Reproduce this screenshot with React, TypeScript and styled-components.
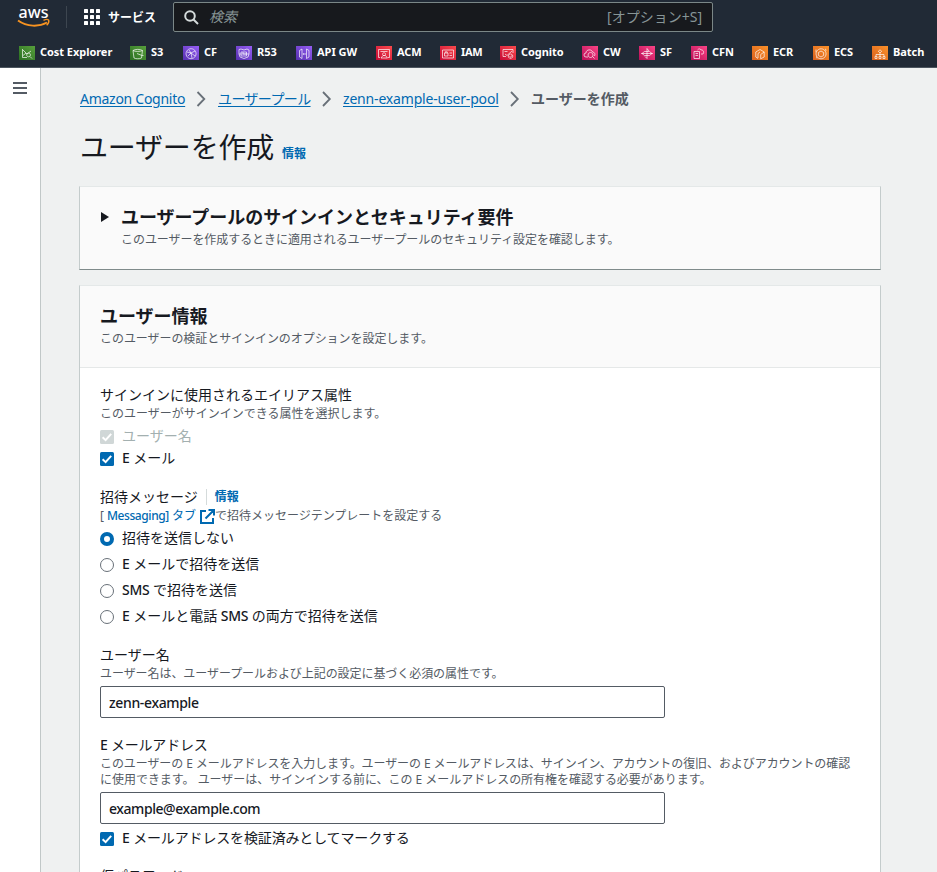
import React from 'react';
import styled, { createGlobalStyle } from 'styled-components';

const BLUE = '#0069b1';
const INK = '#16191f';
const GREY = '#545b64';

const Global = createGlobalStyle`
  * { box-sizing: border-box; }
  body {
    margin: 0;
    background: #eff1f1;
    font-family: "Noto Sans", "Noto Sans CJK JP", sans-serif;
    font-size: 14px;
    color: ${INK};
    overflow: hidden;
  }
`;

const Page = styled.div`
  width: 937px;
  height: 872px;
  overflow: hidden;
  display: flex;
  flex-direction: column;
`;

const TopBar = styled.header`
  flex: none;
  height: 68px;
  background: #212a36;
  border-bottom: 1px solid #4c555f;
  color: #fff;
`;

const TopRow = styled.div`
  display: flex;
  align-items: center;
  height: 34px;
  padding-left: 17px;
`;

const Logo = styled.svg`
  flex: none;
  width: 34px;
  height: 24px;
  margin-top: -2px;
  overflow: visible;
`;

const Divider = styled.span`
  width: 1px;
  height: 22px;
  margin: 0 17px 0 15px;
  background: #3d4650;
`;

const Services = styled.div`
  display: flex;
  align-items: center;
  gap: 8px;
  width: 89px;
  font-size: 12px;
  font-weight: 700;
  white-space: nowrap;
  svg { flex: none; }
`;

const Search = styled.div`
  display: flex;
  align-items: center;
  width: 540px;
  height: 30px;
  padding: 0 10px 0 10px;
  background: #17191d;
  border: 1px solid #7b8787;
  border-radius: 2px;
  color: #879596;
  font-size: 14px;
  line-height: 20px;
  span { margin-top: -1px; }
`;

const Placeholder = styled.span`
  flex: 1;
  margin-left: 10px;
  font-style: italic;
`;

const Favorites = styled.nav`
  display: grid;
  grid-template-columns: 111px 53px 53px 60px 80px 64px 60px 82px 57px 52px 61px 61px 59px 60px;
  height: 33px;
  padding: 3px 0 0 19px;
  align-items: center;
`;

const Favorite = styled.div<{ $track?: number }>`
  display: flex;
  align-items: center;
  gap: 5px;
  font: 700 11px/16px "Noto Sans", sans-serif;
  letter-spacing: ${p => p.$track ?? 0}px;
  white-space: nowrap;
  svg { flex: none; margin-top: 1px; }
`;

const Body = styled.div`
  flex: 1;
  display: flex;
  min-height: 0;
`;

const Rail = styled.aside`
  flex: none;
  width: 41px;
  padding: 14px 0 0 13px;
  background: #fff;
  border-right: 1px solid #c1c8c8;
  svg { display: block; }
`;

const Main = styled.main`
  width: 802px;
  margin-left: 38px;
  padding-top: 21px;
`;

const Crumbs = styled.nav`
  display: flex;
  align-items: center;
  height: 20px;
  padding-left: 1px;
  line-height: 20px;
  white-space: nowrap;
  svg { flex: none; }
`;

const CrumbLink = styled.a<{ $w: number; $track?: number }>`
  width: ${p => p.$w}px;
  color: ${BLUE};
  letter-spacing: ${p => p.$track ?? 0}px;
  text-decoration: underline;
  text-underline-offset: 2px;
`;

const CrumbCurrent = styled.span`
  color: ${GREY};
  font-weight: 700;
`;

const TitleRow = styled.div`
  display: flex;
  align-items: baseline;
  gap: 8px;
  height: 40px;
  margin: 18px 0 19px 1px;
`;

const Title = styled.h1`
  margin: 0;
  font-size: 28px;
  line-height: 40px;
  font-weight: 400;
  letter-spacing: -0.2px;
`;

const Info = styled.a`
  color: ${BLUE};
  font-size: 12px;
  font-weight: 700;
`;

const Card = styled.section<{ $tall?: boolean }>`
  height: ${p => (p.$tall ? '640px' : '84px')};
  margin-bottom: 15px;
  background: ${p => (p.$tall ? '#fff' : '#fafafa')};
  border: 1px solid #c4cccc;
  border-top-color: #e4e8e8;
  border-bottom-color: #7f8b8b;
`;

const CardHead = styled.div<{ $arrow?: boolean }>`
  display: flex;
  gap: 12px;
  height: 82px;
  padding: 18px 0 0 20px;
  background: #fafafa;
  border-bottom: ${p => (p.$arrow ? 'none' : '1px solid #e5e8e8')};
  svg { flex: none; margin-top: 6px; }
`;

const CardTitle = styled.h2`
  margin: 0;
  font-size: 18px;
  line-height: 24px;
  font-weight: 700;
  letter-spacing: -0.05px;
`;

const Hint = styled.div`
  margin-top: 1px;
  color: ${GREY};
  font-size: 12px;
  line-height: 16px;
  white-space: nowrap;
`;

const HeadHint = styled(Hint)`
  line-height: 20px;
  letter-spacing: -0.06px;
`;

const Tight = styled.span<{ $track: number }>`
  letter-spacing: ${p => p.$track}px;
`;

const Form = styled.div`
  display: flex;
  flex-direction: column;
  padding: 17px 20px 0;
`;

const Field = styled.div<{ $gap?: number }>`
  padding-bottom: ${p => p.$gap ?? 17}px;
`;

const Label = styled.div`
  display: flex;
  align-items: center;
  height: 20px;
  line-height: 20px;
  white-space: nowrap;
`;

const LabelInfo = styled(Info)`
  margin-left: 8px;
  padding-left: 8px;
  border-left: 1px solid #d5dbdb;
  line-height: 16px;
`;

const Options = styled.div<{ $top: number }>`
  padding-top: ${p => p.$top}px;
`;

const Option = styled.label<{ $h: number; $disabled?: boolean }>`
  display: flex;
  align-items: center;
  gap: 8px;
  height: ${p => p.$h}px;
  color: ${p => (p.$disabled ? '#a3b0b0' : INK)};
  line-height: 20px;
  white-space: nowrap;
`;

const OptionText = styled.span`
  padding-bottom: 2px;
`;

const Medium = styled.span<{ $track?: number }>`
  font-weight: 500;
  letter-spacing: ${p => p.$track ?? -0.3}px;
`;

const MessagingLine = styled(Hint)`
  display: flex;
  align-items: center;
  a { color: ${BLUE}; margin-left: 3px; }
  svg { margin: 0 0 0 4px; }
`;

const Input = styled.input<{ $track?: number }>`
  display: block;
  width: 565px;
  height: 32px;
  margin-top: 4px;
  padding: 0 8px;
  border: 1px solid #545b64;
  border-radius: 2px;
  outline: none;
  background: #fff;
  color: ${INK};
  font: 500 14px "Noto Sans", sans-serif;
  letter-spacing: ${p => p.$track ?? 0}px;
`;

const Check = ({ disabled }: { disabled?: boolean }) => (
  <svg width="14" height="14" viewBox="0 0 14 14">
    <rect width="14" height="14" rx="1.5" fill={disabled ? '#d0d7d7' : BLUE} />
    <path d="M2.6 7.2 5.6 10.1 11.2 3.8" fill="none" stroke="#fff" strokeWidth="2" />
  </svg>
);

const Radio = ({ on }: { on?: boolean }) => (
  <svg width="14" height="14" viewBox="0 0 14 14">
    {on ? (
      <circle cx="7" cy="7" r="5" fill="#fff" stroke={BLUE} strokeWidth="4" />
    ) : (
      <circle cx="7" cy="7" r="6.5" fill="#fff" stroke="#687078" />
    )}
  </svg>
);

const Chevron = ({ width }: { width: number }) => (
  <svg width={width} height="16" viewBox={`${-(width - 9) / 2} 0 ${width} 16`}>
    <path d="M.5 1 7.3 8 .5 15" fill="none" stroke="#687078" strokeWidth="1.8" />
  </svg>
);

type Fav = { name: string; tone: 'green' | 'purple' | 'red' | 'pink' | 'orange'; d: string; track?: number };

const tones = {
  green: ['#2a6f22', '#58a03c'],
  purple: ['#5730b0', '#965ef5'],
  red: ['#c60a35', '#fb4a4c'],
  pink: ['#b90f56', '#fb4487'],
  orange: ['#d9611f', '#fb9129'],
};

const favorites: Fav[] = [
  { name: 'Cost Explorer', tone: 'green', track: -0.05, d: 'M3.500 3v8.500H8M4 4l4 4 4-3M4 9.500l3-2.500M9.500 7a1.900 1.900 0 1 0 .1 0M11 10.500l2 2' },
  { name: 'S3', tone: 'green', d: 'M3 4.500c2-1.500 7.500-1.500 9.500 0M3 4.500l1 7.500c2 1 5.500 1 7.500 0l1-7.500M3 4.500c2 1.300 7 1.300 9.500 0M7 7.500l5 2h1.500' },
  { name: 'CF', tone: 'purple', track: -0.1, d: 'M8 2.700a5 5 0 1 0 .1 0M4 6l4 1 4-2M8 7l1 5M5 10l3-3 4 3M6 4l2 3' },
  { name: 'R53', tone: 'purple', d: 'M3 3.500 5 3l3 1 3-1 2 1v4l-1 3-4 1.500-4-1.500-1-3zM5 6h5.500v4H5zM7 6v2h3.500M3 8h10' },
  { name: 'API GW', tone: 'purple', d: 'M6 3v9.500L3.500 11V4.500zM10.500 3v9.500L13 11V4.500zM7.400 7v2M9 7v2' },
  { name: 'ACM', tone: 'red', track: -0.1, d: 'M4 11.500H2.500v-8h11v8H12M4.500 5.500h7M5 12l2-2.500h2.500l2 2.500zM8 6.700a1.500 1.500 0 1 0 .1 0' },
  { name: 'IAM', tone: 'red', track: -0.3, d: 'M2.500 4h11v8h-11zM4.500 7h3.500v3H4.500zM5.200 7V5.800h2V7M9.500 7H12M9.500 9.500H12' },
  { name: 'Cognito', tone: 'red', track: -0.05, d: 'M6 10.500H3v-7h10V7M4.500 5.500h3M5 8l2 1.500L12 5M10.500 8a2.200 2.200 0 1 0 .1 0M9.500 10.500l1 .8 1.500-2' },
  { name: 'CW', tone: 'pink', track: -0.1, d: 'M6 11H4a2 2 0 0 1 0-4c0-4 6-4 6.500-1 2 0 3 2 2 4M8.500 6.500a2.500 2.500 0 1 0 .1 0M10.500 10.500l2 2' },
  { name: 'SF', tone: 'pink', d: 'M8 2.500v10M5.500 5.500h5L13 7.500l-2.500 2h-5L3 7.500zM2 7.500h12M8 2.500 10 5M8 12.500l-2-2' },
  { name: 'CFN', tone: 'pink', track: -0.1, d: 'M3 5.500h5.500v7H3zM4.500 7.500H7M4.500 9.500H7M6.500 4c1-1.500 3-1.500 3.500 0 2-.5 3.500 2 2 4h-2' },
  { name: 'ECR', tone: 'orange', track: -0.1, d: 'M6 12.500 3.800 11V6L8 3.500 12.200 6v5l-3.500 1.800V8.500l3.500-2.500M6 12V7.500L8 6' },
  { name: 'ECS', tone: 'orange', track: -0.1, d: 'M8 2.800a5 5 0 1 0 .1 0M8 5l2.600 1.500v3L8 11 5.400 9.500v-3zM3 3.500v2.800M12.500 2.800l.5 2M4 12.500l-.5-2' },
  { name: 'Batch', tone: 'orange', track: -0.05, d: 'M8 7v3M4 10V8.500h8V10M8 3.800l1.700 1.500L8 7 6.300 5.300zM3 10.500h2v2H3zM7 10.500h2v2H7zM11 10.500h2v2h-2z' },
];

const FavIcon = ({ tone, d }: Fav) => (
  <svg width="16" height="14" viewBox="0 0 16 14">
    <defs>
      <linearGradient id={`g-${tone}`} x1="0" y1="1" x2="1" y2="0">
        <stop offset="0" stopColor={tones[tone][0]} />
        <stop offset="1" stopColor={tones[tone][1]} />
      </linearGradient>
    </defs>
    <rect width="16" height="14" fill={`url(#g-${tone})`} />
    <path d={d} fill="none" stroke="#fff" strokeOpacity=".85" strokeWidth=".8" />
  </svg>
);

export default function App() {
  return (
    <Page>
      <Global />
      <TopBar>
        <TopRow>
          <Logo viewBox="0 0 34 24">
            <text x="1.500" y="14.200" fill="#fff" fontFamily="Noto Sans" fontSize="17" fontWeight="500" textLength="30" lengthAdjust="spacingAndGlyphs">aws</text>
            <path d="M1 16.500C10 23 22 23 30 18.500" fill="none" stroke="#f79321" strokeWidth="2" />
            <path d="M26.500 16.300c2-.9 4.500-.9 5.200-.1.400 1-.6 3.500-2 5" fill="none" stroke="#f79321" strokeWidth="1.400" />
          </Logo>
          <Divider />
          <Services>
            <svg width="16" height="16" viewBox="0 0 16 16" fill="#fff">
              {[0, 6, 12].map(y => [0, 6, 12].map(x => <rect key={`${x}-${y}`} x={x} y={y} width="4" height="4" rx=".6" />))}
            </svg>
            サービス
          </Services>
          <Search>
            <svg width="15" height="15" viewBox="0 0 15 15" fill="none" stroke="#d5dbdb" strokeWidth="2">
              <circle cx="6" cy="6" r="4.800" />
              <path d="m9.500 9.500 4.500 4.500" />
            </svg>
            <Placeholder>検索</Placeholder>
            <span>[オプション+S]</span>
          </Search>
        </TopRow>
        <Favorites>
          {favorites.map(f => (
            <Favorite key={f.name} $track={f.track}>
              <FavIcon {...f} />
              {f.name}
            </Favorite>
          ))}
        </Favorites>
      </TopBar>
      <Body>
        <Rail>
          <svg width="14" height="12" viewBox="0 0 14 12" stroke="#545b64" strokeWidth="2">
            <path d="M0 1h14M0 6h14M0 11h14" />
          </svg>
        </Rail>
        <Main>
          <Crumbs>
            <CrumbLink $w={105} $track={-0.27}>Amazon Cognito</CrumbLink>
            <Chevron width={33} />
            <CrumbLink $w={93} $track={-0.62}>ユーザープール</CrumbLink>
            <Chevron width={32} />
            <CrumbLink $w={156} $track={-0.18}>zenn-example-user-pool</CrumbLink>
            <Chevron width={32} />
            <CrumbCurrent>ユーザーを作成</CrumbCurrent>
          </Crumbs>
          <TitleRow>
            <Title>ユーザーを作成</Title>
            <Info>情報</Info>
          </TitleRow>
          <Card>
            <CardHead $arrow>
              <svg width="9" height="12" viewBox="0 0 9 12"><path d="M1 1 9 6 1 11z" fill={INK} /></svg>
              <div>
                <CardTitle>ユーザープールのサインインとセキュリティ要件</CardTitle>
                <HeadHint>このユーザーを作成するときに適用されるユーザープールのセキュリティ設定を確認します。</HeadHint>
              </div>
            </CardHead>
          </Card>
          <Card $tall>
            <CardHead>
              <div>
                <CardTitle>ユーザー情報</CardTitle>
                <HeadHint>このユーザーの検証とサインインのオプションを設定します。</HeadHint>
              </div>
            </CardHead>
            <Form>
              <Field>
                <Label>サインインに使用されるエイリアス属性</Label>
                <Hint>このユーザーがサインインできる属性を選択します。</Hint>
                <Options $top={4}>
                  <Option $h={22} $disabled><Check disabled /><OptionText>ユーザー名</OptionText></Option>
                  <Option $h={22}><Check /><OptionText><Medium>E</Medium> メール</OptionText></Option>
                </Options>
              </Field>
              <Field $gap={15}>
                <Label>招待メッセージ<LabelInfo>情報</LabelInfo></Label>
                <MessagingLine>
                  <span>[</span>
                  <a><Medium $track={-0.42}>Messaging]</Medium> タブ</a>
                  <svg width="15" height="15" viewBox="0 0 15 15" fill="none" stroke={BLUE} strokeWidth="2">
                    <path d="M6 2H1v12h12V9M8.500 1H14v5.500M14 1 5.500 9.500" />
                  </svg>
                  <span>で招待メッセージテンプレートを設定する</span>
                </MessagingLine>
                <Options $top={2}>
                  <Option $h={26}><Radio on /><OptionText>招待を送信しない</OptionText></Option>
                  <Option $h={26}><Radio /><OptionText><Medium>E</Medium> メールで招待を送信</OptionText></Option>
                  <Option $h={26}><Radio /><OptionText><Medium>SMS</Medium> で招待を送信</OptionText></Option>
                  <Option $h={26}><Radio /><OptionText><Medium>E</Medium> メールと電話 <Medium>SMS</Medium> の両方で招待を送信</OptionText></Option>
                </Options>
              </Field>
              <Field>
                <Label>ユーザー名</Label>
                <Hint><Tight $track={-0.06}>ユーザー名は、ユーザープールおよび上記の設定に基づく必須の属性です。</Tight></Hint>
                <Input defaultValue="zenn-example" $track={-0.35} />
              </Field>
              <Field $gap={16}>
                <Label><span><Medium $track={-0.5}>E</Medium> <Tight $track={-0.2}>メールアドレス</Tight></span></Label>
                <Hint>
                  <Tight $track={-0.08}>このユーザーの E メールアドレスを入力します。ユーザーの E メールアドレスは、サインイン、アカウントの復旧、およびアカウントの確認</Tight><br />
                  <Tight $track={-0.03}>に使用できます。 ユーザーは、サインインする前に、この E メールアドレスの所有権を確認する必要があります。</Tight>
                </Hint>
                <Input defaultValue="example@example.com" $track={-0.43} />
                <Options $top={4}>
                  <Option $h={22}><Check /><OptionText><Medium>E</Medium> <Tight $track={-0.15}>メールアドレスを検証済みとしてマークする</Tight></OptionText></Option>
                </Options>
              </Field>
              <Field>
                <Label>仮パスワード</Label>
              </Field>
            </Form>
          </Card>
        </Main>
      </Body>
    </Page>
  );
}
